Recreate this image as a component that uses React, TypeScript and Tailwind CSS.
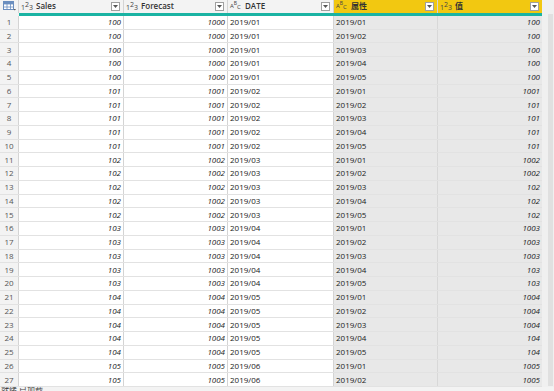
import React from "react";

const vals = [100,100,100,100,100,1001,101,101,101,101,1002,1002,102,102,102,1003,1003,1003,103,103,1004,1004,1004,104,104,1005,1005];
const rows = vals.map((v, i) => {
  const g = Math.floor(i / 5);
  return {
    n: i + 1,
    sales: 100 + g,
    fc: 1000 + g,
    date: `2019/0${g + 1}`,
    attr: `2019/0${(i % 5) + 1}`,
    v,
  };
});

const Drop = () => (
  <div className="w-[9px] h-[9px] bg-white border border-[#a0a0a0] flex items-center justify-center shrink-0">
    <svg width="5" height="3" viewBox="0 0 5 3"><path d="M0 0h5L2.5 3z" fill="#555" /></svg>
  </div>
);

const NumIcon = () => (
  <span className="text-[7px] leading-none text-[#444] flex items-start shrink-0 w-[12px]">
    <span className="mt-[2px]">1</span><span className="-mt-[1px]">2</span><span className="mt-[2px]">3</span>
  </span>
);
const AbcIcon = () => (
  <span className="text-[6px] leading-none text-[#444] flex items-start shrink-0 w-[12px]">
    <span className="mt-[1px]">A</span><span className="-mt-[1px] text-[5px]">B</span><span className="mt-[2px]">C</span>
  </span>
);

const Head = ({ w, icon, label, yellow, last }: { w: string; icon: React.ReactNode; label: string; yellow?: boolean; last?: boolean }) => (
  <div className={`${w} h-full flex items-center pl-[2px] pr-[3px] ${last ? "" : "border-r"} border-[#d4d4d4] ${yellow ? "bg-[#f2c811]" : "bg-[#f3f3f3]"}`}>
    {icon}
    <span className="ml-[3px] text-[8px] font-semibold text-[#333] flex-1 truncate">{label}</span>
    <Drop />
  </div>
);

export default function App() {
  return (
    <div className="w-[554px] h-[391px] overflow-hidden bg-[#f3f3f3] flex flex-col" style={{ fontFamily: '"Open Sans", "Noto Sans CJK SC", sans-serif' }}>
      <div className="flex flex-1 min-h-0">
        <div className="w-[542px] flex flex-col">
          <div className="flex h-[14px]">
            <div className="w-[19px] h-full bg-[#f3f3f3] border-r border-[#d4d4d4] flex items-center justify-center">
              <svg width="13" height="10" viewBox="0 0 13 10">
                <rect x="0.5" y="0.5" width="10" height="8" fill="#fff" stroke="#6a8ebf" />
                <path d="M0.5 3h10M4 3v6M7.5 3v6M0.5 6h10" stroke="#6a8ebf" strokeWidth="0.8" />
                <rect x="0.5" y="0.5" width="10" height="2.5" fill="#6a8ebf" />
                <path d="M10.5 8h2.5l-1.25 1.5z" fill="#555" />
              </svg>
            </div>
            <Head w="w-[105px]" icon={<NumIcon />} label="Sales" />
            <Head w="w-[104px]" icon={<NumIcon />} label="Forecast" />
            <Head w="w-[106px]" icon={<AbcIcon />} label="DATE" />
            <Head w="w-[104px]" icon={<AbcIcon />} label="属性" yellow />
            <Head w="w-[104px]" icon={<NumIcon />} label="值" yellow last />
          </div>
          <div className="h-[3px] bg-[#1ab3a3] ml-[19px]" />
          <div className="flex flex-col text-[8px] text-[#222]">
            {rows.map((r) => (
              <div key={r.n} className="flex h-[13.75px] border-b border-[#e2e2e2] leading-none">
                <div className="w-[19px] bg-[#f3f3f3] border-r border-[#d4d4d4] flex items-center justify-center text-[#555]">{r.n}</div>
                <div className="w-[105px] bg-white border-r border-[#d4d4d4] flex items-center justify-end pr-[2px] italic">{r.sales}</div>
                <div className="w-[104px] bg-white border-r border-[#d4d4d4] flex items-center justify-end pr-[2px] italic">{r.fc}</div>
                <div className="w-[106px] bg-white border-r border-[#d4d4d4] flex items-center pl-[2px]">{r.date}</div>
                <div className="w-[104px] bg-[#e8e8e8] border-r border-[#d8d8d8] flex items-center pl-[2px]">{r.attr}</div>
                <div className="w-[104px] bg-[#e8e8e8] flex items-center justify-end pr-[2px] italic">{r.v}</div>
              </div>
            ))}
          </div>
        </div>
        <div className="w-[12px] bg-[#f0f0f0] flex justify-center pt-[14px]">
          <div className="w-[5px] h-[372px] bg-[#e0e0e0] ml-[4px]" />
        </div>
      </div>
      <div className="h-[4px] shrink-0 bg-[#f3f3f3] text-[8px] leading-none pl-[1px] text-[#444] overflow-hidden">
        <span className="block -mt-[1px]">就绪 已加载</span>
      </div>
    </div>
  );
}
